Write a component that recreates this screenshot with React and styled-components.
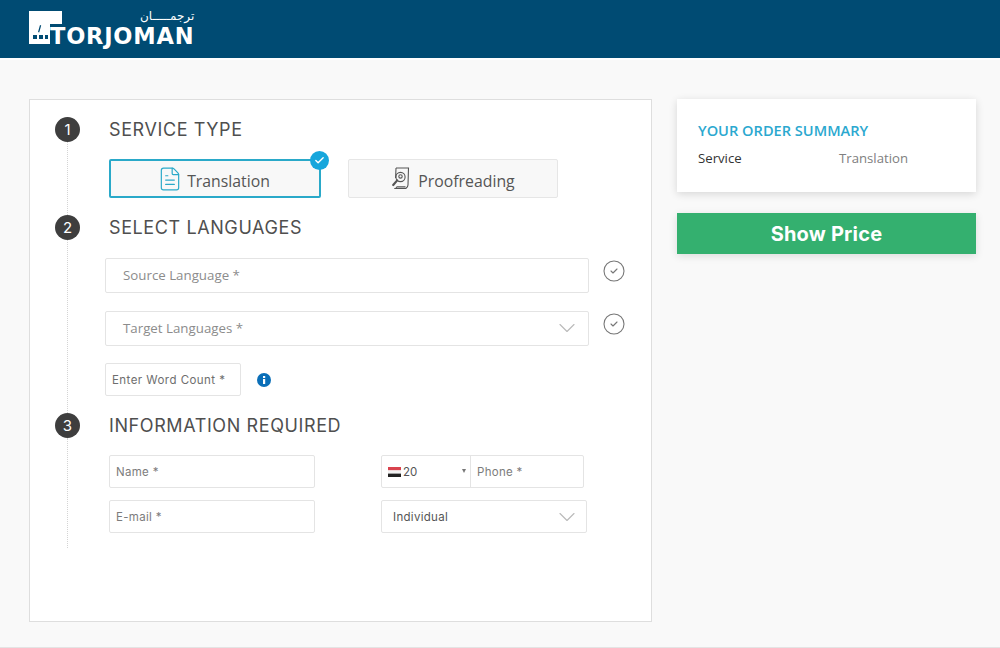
import React from 'react';
import styled, {createGlobalStyle} from 'styled-components';
import {FileText, CircleCheck, ChevronDown, Check} from 'lucide-react';

const GlobalStyle = createGlobalStyle`
    html, body
    {
        margin: 0;
        padding: 0;
        background: #f9f9f9;
    }
    *
    {
        box-sizing: border-box;
    }
`;

function Logo()
{
    return (
        <Brand>
            <LogoMark viewBox="0 0 33 33">
                <path d="M0 0h33v13H21v20H0z" fill="#fff"/>
                <rect x="4" y="24" width="4" height="4" fill="#004b73"/>
                <rect x="10" y="24" width="4" height="4" fill="#004b73"/>
                <rect x="16" y="24" width="3" height="4" fill="#004b73"/>
                <path d="M9 21l2-7 1.2.4-2 7z" fill="#004b73"/>
            </LogoMark>
            <LogoWords>
                <LogoArabic>ترجمـــــان</LogoArabic>
                <LogoLatin>TORJOMAN</LogoLatin>
            </LogoWords>
        </Brand>
    );
}

function ProofIcon()
{
    return (
        <svg width="19" height="23" viewBox="0 0 19 23" fill="none" stroke="#555" strokeWidth="1.1">
            <path d="M5 1h12.5l-.5 17c0 1.5-.8 2.5-2.2 3.5H3.5"/>
            <path d="M5 1L4.6 11"/>
            <path d="M3.5 21.5c1.3 0 2.2-.6 2.5-1.6h8.5"/>
            <circle cx="9.5" cy="10" r="4.6"/>
            <circle cx="9.5" cy="9.4" r="1.7"/>
            <path d="M6.2 13.4L2.2 18" strokeWidth="2.2" strokeLinecap="round"/>
        </svg>
    );
}

function InfoDot()
{
    return (
        <svg width="14" height="14" viewBox="0 0 14 14">
            <circle cx="7" cy="7" r="7" fill="#0b6fb8"/>
            <rect x="6" y="6" width="2.2" height="5" fill="#fff"/>
            <rect x="6" y="3" width="2.2" height="2" fill="#fff"/>
        </svg>
    );
}

function EgyptFlag()
{
    return (
        <svg width="13" height="10" viewBox="0 0 13 10">
            <rect width="13" height="3.4" fill="#d9434e"/>
            <rect y="3.4" width="13" height="3.2" fill="#f2f2f2"/>
            <rect y="6.6" width="13" height="3.4" fill="#222"/>
        </svg>
    );
}

function App()
{
    return (
        <>
            <GlobalStyle/>
            <Page>
                <Header>
                    <Logo/>
                </Header>
                <Content>
                    <FormCard>
                        <Step $height={98}>
                            <Rail>
                                <Badge>1</Badge>
                                <RailLine/>
                            </Rail>
                            <StepBody>
                                <StepTitle>SERVICE TYPE</StepTitle>
                                <ServiceRow>
                                    <ServiceButton $active>
                                        <FileText size={26} strokeWidth={1.1} color="#2aa9c9"/>
                                        <ServiceLabel>Translation</ServiceLabel>
                                        <CheckBadge><Check size={11} strokeWidth={3} color="#fff"/></CheckBadge>
                                    </ServiceButton>
                                    <ServiceButton>
                                        <ProofIcon/>
                                        <ServiceLabel>Proofreading</ServiceLabel>
                                    </ServiceButton>
                                </ServiceRow>
                            </StepBody>
                        </Step>

                        <Step $height={198}>
                            <Rail>
                                <Badge>2</Badge>
                                <RailLine/>
                            </Rail>
                            <StepBody>
                                <StepTitle>SELECT LANGUAGES</StepTitle>
                                <LanguageList>
                                    <LanguageRow>
                                        <LanguageField>Source Language *</LanguageField>
                                        <CircleCheck size={24} strokeWidth={1.1} color="#777"/>
                                    </LanguageRow>
                                    <LanguageRow>
                                        <LanguageField>
                                            Target Languages *
                                            <ChevronDown size={28} strokeWidth={1} color="#bbb"/>
                                        </LanguageField>
                                        <CircleCheck size={24} strokeWidth={1.1} color="#777"/>
                                    </LanguageRow>
                                    <CountRow>
                                        <CountField>Enter Word Count *</CountField>
                                        <InfoDot/>
                                    </CountRow>
                                </LanguageList>
                            </StepBody>
                        </Step>

                        <Step $height={135}>
                            <Rail>
                                <Badge>3</Badge>
                                <RailLine/>
                            </Rail>
                            <StepBody>
                                <StepTitle>INFORMATION REQUIRED</StepTitle>
                                <InfoGrid>
                                    <SmallField>Name *</SmallField>
                                    <PhoneField>
                                        <DialCode>
                                            <EgyptFlag/>
                                            <span>20</span>
                                            <DialCaret/>
                                        </DialCode>
                                        <PhoneInput>Phone *</PhoneInput>
                                    </PhoneField>
                                    <SmallField>E-mail *</SmallField>
                                    <SelectField>
                                        Individual
                                        <ChevronDown size={28} strokeWidth={1} color="#bbb"/>
                                    </SelectField>
                                </InfoGrid>
                            </StepBody>
                        </Step>
                    </FormCard>

                    <Aside>
                        <SummaryCard>
                            <SummaryTitle>YOUR ORDER SUMMARY</SummaryTitle>
                            <SummaryRow>
                                <span>Service</span>
                                <SummaryValue>Translation</SummaryValue>
                            </SummaryRow>
                        </SummaryCard>
                        <PriceButton>Show Price</PriceButton>
                    </Aside>
                </Content>
            </Page>
        </>
    );
}

const Page = styled.div`
    width: 1000px;
    height: 648px;
    display: flex;
    flex-direction: column;
    overflow: hidden;
    background: #f9f9f9;
    border-bottom: 1px solid #e4e4e4;
`;

const Header = styled.header`
    height: 58px;
    flex: none;
    display: flex;
    align-items: flex-start;
    padding: 11px 0 0 29px;
    background: #004b73;
    box-shadow: 0 2px 0 #fff;
`;

const Brand = styled.div`
    display: flex;
    align-items: flex-start;
`;

const LogoMark = styled.svg`
    width: 33px;
    height: 33px;
    flex: none;
`;

const LogoWords = styled.div`
    display: flex;
    flex-direction: column;
    align-items: flex-end;
    margin-left: -12px;
    color: #fff;
`;

const LogoArabic = styled.div`
    height: 15px;
    font-family: "DejaVu Sans", sans-serif;
    font-size: 12px;
    line-height: 10px;
    white-space: nowrap;
`;

const LogoLatin = styled.div`
    font-family: "DejaVu Sans", sans-serif;
    font-weight: 700;
    font-size: 22.5px;
    line-height: 20px;
    letter-spacing: 0.8px;
`;

const Content = styled.main`
    flex: 1;
    display: flex;
    align-items: flex-start;
    padding: 41px 24px 0 29px;
    gap: 25px;
`;

const FormCard = styled.section`
    width: 623px;
    height: 523px;
    padding: 17px 25px 0;
    background: #fff;
    border: 1px solid #dedede;
`;

const Step = styled.div`
    height: ${props => props.$height}px;
    display: flex;
    gap: 29px;
`;

const Rail = styled.div`
    width: 25px;
    flex: none;
    display: flex;
    flex-direction: column;
    align-items: center;
`;

const Badge = styled.div`
    width: 25px;
    height: 25px;
    flex: none;
    border-radius: 50%;
    display: flex;
    align-items: center;
    justify-content: center;
    background: #3e3e3e;
    color: #fff;
    font-family: "Inter", sans-serif;
    font-size: 15px;
`;

const RailLine = styled.div`
    flex: 1;
    border-left: 1px dotted #d4d4d4;
`;

const StepBody = styled.div`
    flex: 1;
    min-width: 0;
`;

const StepTitle = styled.h2`
    margin: 0 0 17px;
    height: 25px;
    font-family: "Inter", sans-serif;
    font-weight: 400;
    font-size: 18px;
    line-height: 25px;
    letter-spacing: 0.6px;
    color: #4f4f4f;
`;

const ServiceRow = styled.div`
    display: flex;
    gap: 27px;
`;

const ServiceButton = styled.div`
    position: relative;
    height: 39px;
    width: ${props => props.$active ? '212px' : '210px'};
    display: flex;
    align-items: center;
    justify-content: center;
    gap: ${props => props.$active ? '4px' : '8px'};
    padding-right: ${props => props.$active ? '3px' : '0'};
    background: #f8f8f8;
    border: ${props => props.$active ? '2px solid #2aa9c9' : '1px solid #e6e6e6'};
    border-radius: 2px;
`;

const ServiceLabel = styled.span`
    padding-top: 5px;
    font-family: "Open Sans", sans-serif;
    font-size: 15.8px;
    color: #555;
`;

const CheckBadge = styled.div`
    position: absolute;
    top: -10px;
    right: -10px;
    width: 19px;
    height: 19px;
    border-radius: 50%;
    display: flex;
    align-items: center;
    justify-content: center;
    background: #16a6dc;
`;

const LanguageList = styled.div`
    padding-top: 1px;
`;

const LanguageRow = styled.div`
    display: flex;
    align-items: flex-start;
    gap: 13px;
    margin: 0 0 18px -4px;

    > svg
    {
        flex: none;
        margin-top: 1px;
    }
`;

const LanguageField = styled.div`
    width: 484px;
    height: 35px;
    display: flex;
    align-items: center;
    justify-content: space-between;
    padding: 0 7px 2px 17px;
    background: #fff;
    border: 1px solid #e4e4e4;
    border-radius: 2px;
    font-family: "Open Sans", sans-serif;
    font-size: 13.3px;
    color: #8c8c8c;
`;

const CountRow = styled.div`
    display: flex;
    align-items: center;
    gap: 16px;
    margin: -1px 0 0 -4px;
`;

const CountField = styled.div`
    width: 136px;
    height: 33px;
    display: flex;
    align-items: center;
    padding-left: 6px;
    border: 1px solid #e4e4e4;
    border-radius: 2px;
    font-family: "Inter", sans-serif;
    font-size: 11.5px;
    letter-spacing: 0.45px;
    color: #6e6e6e;
`;

const InfoGrid = styled.div`
    display: grid;
    grid-template-columns: 206px 206px;
    grid-auto-rows: 33px;
    column-gap: 66px;
    row-gap: 12px;
`;

const SmallField = styled.div`
    display: flex;
    align-items: center;
    padding-left: 6px;
    border: 1px solid #e4e4e4;
    border-radius: 2px;
    font-family: "Inter", sans-serif;
    font-size: 11.5px;
    letter-spacing: 0.3px;
    color: #7c7c7c;
`;

const PhoneField = styled.div`
    width: 203px;
    display: flex;
    border: 1px solid #e4e4e4;
    border-radius: 2px;
`;

const DialCode = styled.div`
    width: 89px;
    display: flex;
    align-items: center;
    gap: 2px;
    padding-left: 6px;
    position: relative;
    border-right: 1px solid #e4e4e4;
    font-family: "Inter", sans-serif;
    font-size: 11.5px;
    color: #555;
`;

const DialCaret = styled.i`
    position: absolute;
    right: 4px;
    top: 13px;
    border-top: 4px solid #777;
    border-left: 2.5px solid transparent;
    border-right: 2.5px solid transparent;
`;

const PhoneInput = styled.div`
    flex: 1;
    display: flex;
    align-items: center;
    padding-left: 6px;
    font-family: "Inter", sans-serif;
    font-size: 11.5px;
    letter-spacing: 0.3px;
    color: #7c7c7c;
`;

const SelectField = styled.div`
    display: flex;
    align-items: center;
    justify-content: space-between;
    padding: 0 5px 0 11px;
    border: 1px solid #e4e4e4;
    border-radius: 2px;
    font-family: "Inter", sans-serif;
    font-size: 11.5px;
    letter-spacing: 0.3px;
    color: #555;
`;

const Aside = styled.aside`
    width: 299px;
    flex: none;
    display: flex;
    flex-direction: column;
    gap: 21px;
`;

const SummaryCard = styled.div`
    height: 93px;
    padding: 21px 21px 0;
    background: #fff;
    box-shadow: 0 2px 8px rgba(0, 0, 0, 0.14);
`;

const SummaryTitle = styled.h3`
    margin: 0 0 9px;
    font-family: "Open Sans", sans-serif;
    font-weight: 600;
    font-size: 14.6px;
    line-height: 20px;
    color: #2ba8cf;
`;

const SummaryRow = styled.div`
    display: grid;
    grid-template-columns: 141px 1fr;
    font-family: "Open Sans", sans-serif;
    font-size: 13.2px;
    line-height: 18px;
    color: #333;
`;

const SummaryValue = styled.span`
    color: #808080;
`;

const PriceButton = styled.div`
    height: 41px;
    display: flex;
    align-items: center;
    justify-content: center;
    background: #34b06f;
    box-shadow: 0 2px 8px rgba(0, 0, 0, 0.12);
    font-family: "Inter", sans-serif;
    font-weight: 700;
    font-size: 20px;
    letter-spacing: 0.2px;
    color: #fff;
`;

export default App;
